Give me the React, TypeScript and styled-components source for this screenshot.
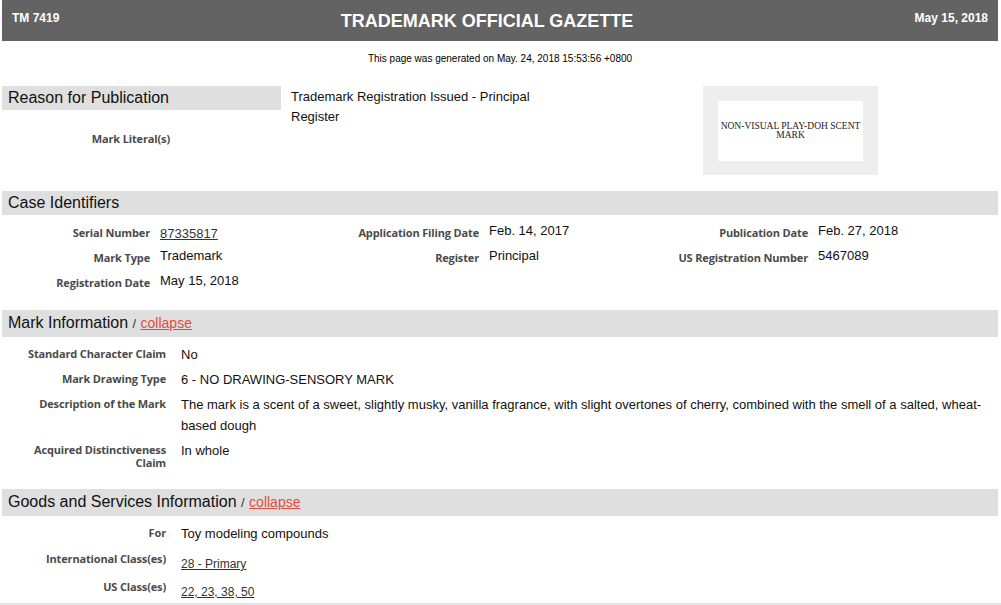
import React from 'react';
import styled, { createGlobalStyle } from 'styled-components';

const GlobalStyle = createGlobalStyle`
  html, body {
    margin: 0;
    padding: 0;
    background: #fff;
  }
  body {
    font-family: "Liberation Sans", Arial, sans-serif;
    color: #111;
  }
`;

const Page = styled.div`
  padding: 0 3px 0 2px;
`;

const Header = styled.header`
  height: 41px;
  box-sizing: border-box;
  background: #636363;
  color: #fff;
  display: flex;
  justify-content: space-between;
  align-items: flex-start;
  padding: 10px 10px 0 10px;
  font-weight: bold;
`;

const HeadSide = styled.div`
  font-size: 12px;
  line-height: 14px;
  padding-top: 1px;
`;

const HeadTitle = styled.div`
  font-size: 18px;
  line-height: 22px;
`;

const Generated = styled.div`
  text-align: center;
  font-size: 10px;
  line-height: 12px;
  margin-top: 12px;
  color: #000;
`;

const ReasonGrid = styled.div`
  display: grid;
  grid-template-columns: 279px 262px 1fr;
  column-gap: 10px;
  margin-top: 21px;
`;

const Bar = styled.div<{ $tall?: boolean }>`
  background: #dfdfdf;
  height: ${(p) => (p.$tall ? '27px' : '24px')};
  box-sizing: border-box;
  padding: ${(p) => (p.$tall ? '3px 6px 0' : '2px 6px 0')};
  font-size: 16px;
  line-height: 20px;
  color: #111;
  white-space: nowrap;
`;

const Slash = styled.span`
  font-size: 13px;
  color: #333;
`;

const Collapse = styled.a`
  font-size: 14px;
  color: #e84a3c;
  text-decoration: underline;
  cursor: pointer;
`;

const LiteralLabel = styled.div`
  margin-top: 22px;
  width: 168px;
  text-align: right;
`;

const ReasonValue = styled.div`
  font-size: 13px;
  line-height: 20px;
  padding-top: 1px;
  color: #111;
`;

const MarkFrame = styled.div`
  margin-left: 140px;
  width: 175px;
  height: 89px;
  box-sizing: border-box;
  padding: 15px;
  background: #eeeeee;
`;

const MarkImage = styled.div`
  background: #fff;
  height: 60px;
  display: flex;
  align-items: center;
  justify-content: center;
  text-align: center;
  font-family: "Liberation Serif", "Times New Roman", serif;
  font-size: 9.5px;
  line-height: 9px;
  color: #1a1a1a;
  padding: 0 1px;
`;

const Section = styled.section<{ $first?: boolean }>`
  margin-top: ${(p) => (p.$first ? '16px' : '0')};
`;

const Label = styled.span`
  font-family: "Open Sans", sans-serif;
  font-weight: 700;
  font-size: 11px;
  letter-spacing: -0.15px;
  line-height: 13px;
  color: #4a4a4a;
  text-align: right;
  display: block;
`;

const IdGrid = styled.div`
  display: grid;
  grid-template-columns: repeat(3, 329px);
  grid-auto-rows: 25px;
  padding-top: 6px;
  padding-bottom: 14px;
`;

const IdCell = styled.div`
  display: grid;
  grid-template-columns: 148px 1fr;
  column-gap: 10px;
  align-items: start;

  ${Label} {
    padding-top: 5px;
  }
`;

const Value = styled.span`
  font-size: 13px;
  line-height: 18px;
  color: #111;
`;

const ValueLink = styled.a<{ $small?: boolean }>`
  font-size: ${(p) => (p.$small ? '12px' : '13px')};
  line-height: 18px;
  color: #333;
  text-decoration: underline;
  cursor: pointer;
  display: inline-block;
  vertical-align: top;
  padding-top: ${(p) => (p.$small ? '6px' : '4px')};
`;

const InfoList = styled.div<{ $last?: boolean }>`
  padding-top: 7px;
  padding-bottom: ${(p) => (p.$last ? '19px' : '16px')};
`;

const InfoRow = styled.div<{ $h?: number }>`
  display: grid;
  grid-template-columns: 164px 1fr;
  column-gap: 15px;
  padding: 0 12px 4px 0;
  min-height: ${(p) => (p.$h ? `${p.$h}px` : 'auto')};
  line-height: 18px;

  ${Label} {
    padding-top: 3px;
  }
  ${Value} {
    line-height: 21px;
  }
`;

const BottomEdge = styled.div`
  position: fixed;
  left: 0;
  right: 0;
  bottom: 0;
  height: 2px;
  background: #e6e6e6;
`;

const ids: Array<[string, React.ReactNode]> = [
  ['Serial Number', <ValueLink>87335817</ValueLink>],
  ['Application Filing Date', <Value>Feb. 14, 2017</Value>],
  ['Publication Date', <Value>Feb. 27, 2018</Value>],
  ['Mark Type', <Value>Trademark</Value>],
  ['Register', <Value>Principal</Value>],
  ['US Registration Number', <Value>5467089</Value>],
  ['Registration Date', <Value>May 15, 2018</Value>],
];

const App: React.FC = () => {
  return (
    <Page>
      <GlobalStyle />
      <Header>
        <HeadSide>TM 7419</HeadSide>
        <HeadTitle>TRADEMARK OFFICIAL GAZETTE</HeadTitle>
        <HeadSide>May 15, 2018</HeadSide>
      </Header>
      <Generated>This page was generated on May. 24, 2018 15:53:56 +0800</Generated>

      <ReasonGrid>
        <div>
          <Bar>Reason for Publication</Bar>
          <LiteralLabel>
            <Label>Mark Literal(s)</Label>
          </LiteralLabel>
        </div>
        <ReasonValue>Trademark Registration Issued - Principal Register</ReasonValue>
        <MarkFrame>
          <MarkImage>NON-VISUAL PLAY-DOH SCENT MARK</MarkImage>
        </MarkFrame>
      </ReasonGrid>

      <Section $first>
        <Bar>Case Identifiers</Bar>
        <IdGrid>
          {ids.map(([label, value]) => (
            <IdCell key={label}>
              <Label>{label}</Label>
              <div>{value}</div>
            </IdCell>
          ))}
        </IdGrid>
      </Section>

      <Section>
        <Bar $tall>
          Mark Information <Slash>/</Slash> <Collapse>collapse</Collapse>
        </Bar>
        <InfoList>
          <InfoRow>
            <Label>Standard Character Claim</Label>
            <Value>No</Value>
          </InfoRow>
          <InfoRow>
            <Label>Mark Drawing Type</Label>
            <Value>6 - NO DRAWING-SENSORY MARK</Value>
          </InfoRow>
          <InfoRow>
            <Label>Description of the Mark</Label>
            <Value>
              The mark is a scent of a sweet, slightly musky, vanilla fragrance, with slight overtones of
              cherry, combined with the smell of a salted, wheat-based dough
            </Value>
          </InfoRow>
          <InfoRow>
            <Label>Acquired Distinctiveness Claim</Label>
            <Value>In whole</Value>
          </InfoRow>
        </InfoList>
      </Section>

      <Section>
        <Bar $tall>
          Goods and Services Information <Slash>/</Slash> <Collapse>collapse</Collapse>
        </Bar>
        <InfoList $last>
          <InfoRow $h={22}>
            <Label>For</Label>
            <Value>Toy modeling compounds</Value>
          </InfoRow>
          <InfoRow $h={23}>
            <Label>International Class(es)</Label>
            <div>
              <ValueLink $small>28 - Primary</ValueLink>
            </div>
          </InfoRow>
          <InfoRow $h={24}>
            <Label>US Class(es)</Label>
            <div>
              <ValueLink $small>22, 23, 38, 50</ValueLink>
            </div>
          </InfoRow>
        </InfoList>
      </Section>
      <BottomEdge />
    </Page>
  );
};

export default App;
